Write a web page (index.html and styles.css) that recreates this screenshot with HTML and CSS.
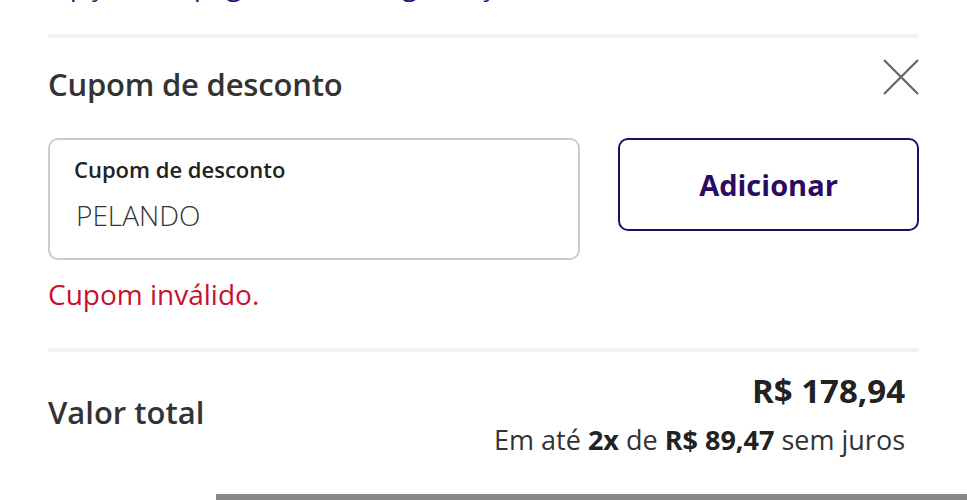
FILE: index.html
```html
<!DOCTYPE html>
<html lang="pt-BR">
<head>
    <meta charset="UTF-8">
    <meta name="viewport" content="width=device-width, initial-scale=1.0">
    <title>Cupom de desconto</title>
    <link rel="stylesheet" href="styles.css">
</head>
<body>
    <div class="container">
        <div class="top-link"><span>Opções de pagamento e segurança</span></div>
        <hr class="divider">
        <div class="coupon-header">
            <h2>Cupom de desconto</h2>
            <button class="close" aria-label="Fechar">
                <svg width="36" height="36" viewBox="0 0 36 36">
                    <path d="M1 1 L35 35 M35 1 L1 35" stroke="#666" stroke-width="2.2" fill="none"/>
                </svg>
            </button>
        </div>
        <div class="coupon-row">
            <label class="field">
                <span class="field-label">Cupom de desconto</span>
                <input type="text" value="PELANDO">
            </label>
            <button class="add">Adicionar</button>
        </div>
        <p class="error">Cupom inválido.</p>
        <hr class="divider">
        <div class="total">
            <span class="total-label">Valor total</span>
            <div class="total-values">
                <div class="price">R$ 178,94</div>
                <div class="installments">Em até <b>2x</b> de <b>R$ 89,47</b> sem juros</div>
            </div>
        </div>
    </div>
    <div class="bottom-bar"></div>
</body>
</html>
```

FILE: styles.css
```css
body {
    margin: 0;
    font-family: "Open Sans", Arial, sans-serif;
    color: #333;
    background: white;
    overflow: hidden;
    height: 500px;
    position: relative;
}
.container {
    padding: 0 48px;
}
.top-link {
    display: flow-root;
    height: 34px;
}
.top-link span {
    display: block;
    margin-top: -35px;
    color: #1b1b7a;
    font-size: 28px;
    line-height: 38px;
}
.divider {
    border: none;
    height: 4px;
    background: #f2f2f2;
    margin: 0;
}
.coupon-header {
    display: flex;
    justify-content: space-between;
    align-items: flex-start;
    padding-top: 25px;
}
.coupon-header h2 {
    margin: 0;
    font-size: 31px;
    font-weight: 600;
    line-height: 42px;
    letter-spacing: -0.2px;
}
.close {
    border: none;
    background: none;
    padding: 0;
    margin-top: -4px;
    margin-right: 0;
    cursor: pointer;
}
.coupon-row {
    display: flex;
    gap: 38px;
    margin-top: 33px;
    align-items: flex-start;
}
.field {
    flex: 0 0 532px;
    box-sizing: border-box;
    height: 122px;
    border: 2px solid #ccc;
    border-radius: 10px;
    padding: 14px 24px;
    display: flex;
    flex-direction: column;
}
.field-label {
    font-size: 22px;
    font-weight: 600;
    line-height: 30px;
    color: #222;
}
.field input {
    border: none;
    outline: none;
    font-family: inherit;
    font-size: 28px;
    font-weight: 300;
    line-height: 38px;
    color: #333;
    padding: 0 0 0 2px;
    margin-top: 12px;
    background: none;
}
.add {
    flex: 1;
    height: 93px;
    background: white;
    border: 2px solid #2a0a5e;
    border-radius: 10px;
    color: #2b0b63;
    font-family: inherit;
    font-size: 29px;
    font-weight: 700;
    cursor: pointer;
}
.error {
    color: #c8102e;
    font-size: 28px;
    margin: 15px 0 35px;
    line-height: 38px;
}
.total {
    display: flex;
    justify-content: space-between;
    align-items: center;
    padding: 19px 14px 0 0;
}
.total-label {
    font-size: 31px;
    font-weight: 600;
    margin-bottom: 6px;
}
.total-values {
    text-align: right;
}
.price {
    font-size: 33px;
    font-weight: 700;
    line-height: 40px;
    color: #222;
}
.installments {
    font-size: 27px;
    line-height: 36px;
    margin-top: 11px;
    color: #333;
}
.installments b {
    font-weight: 700;
    color: #222;
}
.bottom-bar {
    position: absolute;
    left: 216px;
    right: 0;
    bottom: 0;
    height: 6px;
    background: #888;
}
```
